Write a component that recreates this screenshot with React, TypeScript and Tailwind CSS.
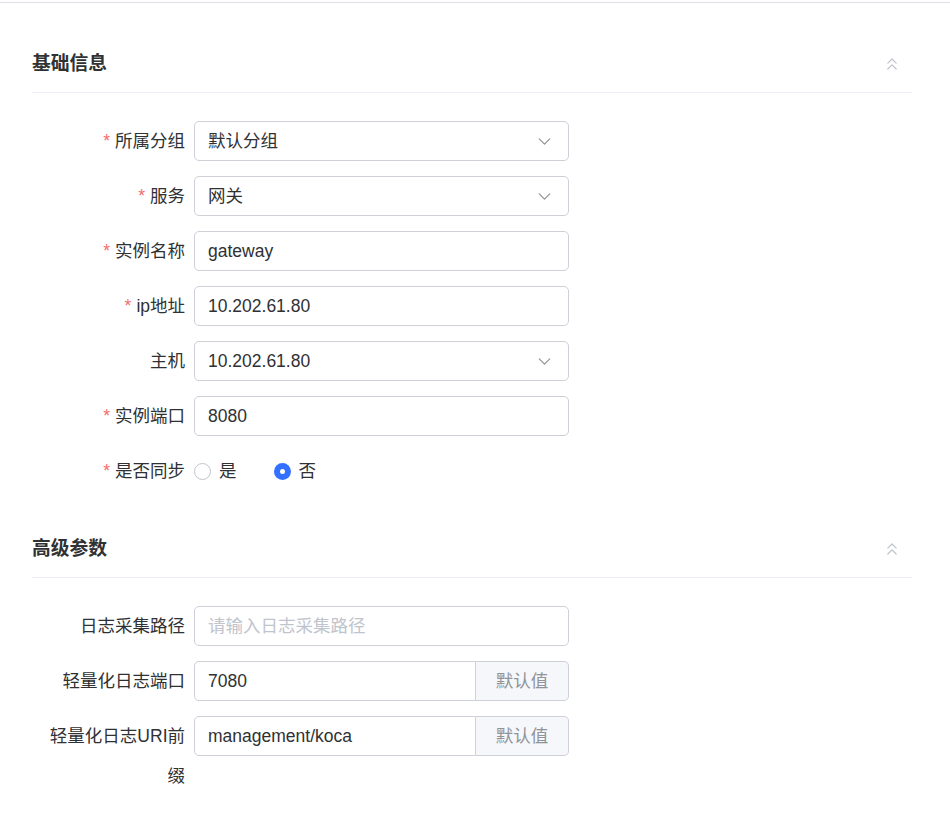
import { ChevronDown, ChevronsUp } from 'lucide-react'

const font = 'font-["Liberation_Sans","Noto_Sans_CJK_SC",sans-serif]'

function SectionHeader({ title }: { title: string }) {
  return (
    <div className="flex h-[61px] items-center justify-between border-b border-[#ebeef5] pt-[4px]">
      <span className="text-[18.75px] font-bold text-[#303133]">{title}</span>
      <ChevronsUp className="mr-[10px] h-[20px] w-[20px] text-[#c0c4cc]" strokeWidth={1.5} />
    </div>
  )
}

function Row({ label, required, children }: { label: string; required?: boolean; children: React.ReactNode }) {
  return (
    <div className="flex items-start">
      <div className="w-[162px] pl-[10px] pr-[9px] text-right leading-[40px] text-[#303133]">
        {required && <span className="mr-[5px] text-[#f56c6c]">*</span>}
        {label}
      </div>
      <div className="flex h-[40px] items-center">{children}</div>
    </div>
  )
}

function TextInput({ value, placeholder }: { value?: string; placeholder?: string }) {
  return (
    <div className="flex h-[40px] w-[375px] items-center rounded-[5px] border border-[#cdd0d6] px-[13px]">
      {value ? (
        <span className="text-[#303133]">{value}</span>
      ) : (
        <span className="text-[#c0c4cc]">{placeholder}</span>
      )}
    </div>
  )
}

function SelectInput({ value }: { value: string }) {
  return (
    <div className="flex h-[40px] w-[375px] items-center justify-between rounded-[5px] border border-[#cdd0d6] pl-[13px] pr-[13px]">
      <span className="text-[#303133]">{value}</span>
      <ChevronDown className="h-[21px] w-[21px] text-[#909399]" strokeWidth={1.4} />
    </div>
  )
}

function AppendInput({ value }: { value: string }) {
  return (
    <div className="flex h-[40px] w-[375px]">
      <div className="flex flex-1 items-center rounded-l-[5px] border border-[#cdd0d6] px-[13px] text-[#303133]">
        {value}
      </div>
      <div className="flex w-[93px] items-center justify-center rounded-r-[5px] border border-l-0 border-[#cdd0d6] bg-[#f5f7fa] text-[#909399]">
        默认值
      </div>
    </div>
  )
}

function Radio({ label, checked }: { label: string; checked?: boolean }) {
  return (
    <label className="flex items-center">
      {checked ? (
        <span className="flex h-[17px] w-[17px] items-center justify-center rounded-full bg-[#3370ff]">
          <span className="h-[5px] w-[5px] rounded-full bg-white" />
        </span>
      ) : (
        <span className="h-[17px] w-[17px] rounded-full border border-[#c0c4cc]" />
      )}
      <span className="ml-[8px] text-[#303133]">{label}</span>
    </label>
  )
}

export default function App() {
  return (
    <div className={`${font} min-h-[819px] bg-white text-[17.5px]`}>
      <div className="mt-[2px] border-t border-[#dcdfe6] pl-[32px] pr-[38px] pt-[29px]">
        <SectionHeader title="基础信息" />
        <div className="flex flex-col gap-[15px] pt-[28px]">
          <Row label="所属分组" required>
            <SelectInput value="默认分组" />
          </Row>
          <Row label="服务" required>
            <SelectInput value="网关" />
          </Row>
          <Row label="实例名称" required>
            <TextInput value="gateway" />
          </Row>
          <Row label="ip地址" required>
            <TextInput value="10.202.61.80" />
          </Row>
          <Row label="主机">
            <SelectInput value="10.202.61.80" />
          </Row>
          <Row label="实例端口" required>
            <TextInput value="8080" />
          </Row>
          <Row label="是否同步" required>
            <div className="flex items-center gap-[37px]">
              <Radio label="是" />
              <Radio label="否" checked />
            </div>
          </Row>
        </div>

        <div className="mt-[26px]">
          <SectionHeader title="高级参数" />
        </div>
        <div className="flex flex-col gap-[15px] pt-[28px] pb-[20px]">
          <Row label="日志采集路径">
            <TextInput placeholder="请输入日志采集路径" />
          </Row>
          <Row label="轻量化日志端口">
            <AppendInput value="7080" />
          </Row>
          <Row label="轻量化日志URI前缀">
            <AppendInput value="management/koca" />
          </Row>
        </div>
      </div>
    </div>
  )
}
